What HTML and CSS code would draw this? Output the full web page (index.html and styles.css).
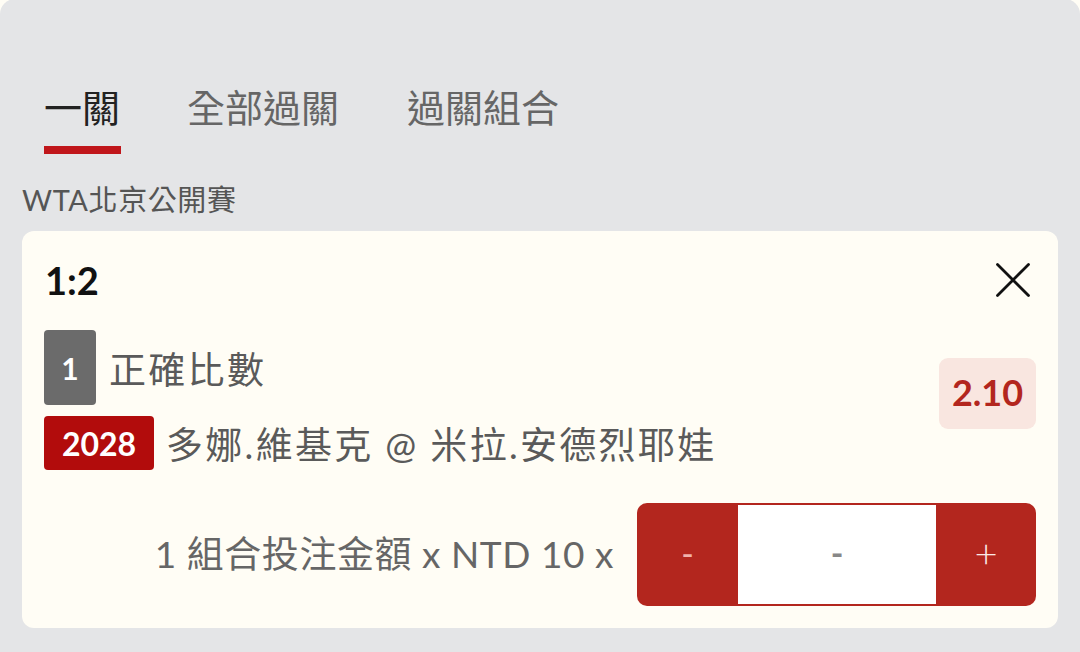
FILE: index.html
```html
<!DOCTYPE html>
<html lang="zh-Hant">
<head>
<meta charset="utf-8">
<title>Bet slip</title>
<link rel="stylesheet" href="styles.css">
</head>
<body>
<div class="panel">
  <nav class="tabs">
    <div class="tab active">一關</div>
    <div class="tab">全部過關</div>
    <div class="tab">過關組合</div>
  </nav>
  <div class="league">WTA北京公開賽</div>
  <section class="card">
    <div class="card-head">
      <div class="score">1:2</div>
      <svg class="close" width="34" height="34" viewBox="0 0 34 34" aria-hidden="true">
        <path d="M1.5 1.5 L32.5 32.5 M32.5 1.5 L1.5 32.5" stroke="#111" stroke-width="2.8" stroke-linecap="round" fill="none"/>
      </svg>
    </div>
    <div class="selection">
      <div class="sel-info">
        <div class="sel-row market">
          <span class="badge grey">1</span>
          <span class="sel-text">正確比數</span>
        </div>
        <div class="sel-row match">
          <span class="badge red">2028</span>
          <span class="sel-text">多娜.維基克 @ 米拉.安德烈耶娃</span>
        </div>
      </div>
      <div class="odds">2.10</div>
    </div>
    <div class="stake-row">
      <span class="stake-text">1 組合投注金額 x NTD 10 x</span>
      <div class="stepper">
        <button class="step minus">-</button>
        <div class="step-value">-</div>
        <button class="step plus">+</button>
      </div>
    </div>
  </section>
</div>
</body>
</html>
```
FILE: styles.css
```css
html, body {
  margin: 0;
  padding: 0;
}
body {
  background: #fffdf5;
  font-family: "Lato", "Noto Sans CJK TC", sans-serif;
  width: 1080px;
  height: 652px;
  overflow: hidden;
}
.panel {
  background: #e4e5e7;
  border-radius: 15px 15px 0 0;
  margin-top: -1px;
  padding: 84px 22px 0;
  height: 653px;
  box-sizing: border-box;
}
.tabs {
  display: flex;
  gap: 66px;
  margin-left: 22px;
}
.tab {
  font-family: "Noto Sans CJK TC", sans-serif;
  font-size: 38px;
  line-height: 46px;
  color: #666;
  display: flex;
  flex-direction: column;
}
.tab:last-child {
  margin-left: 2px;
}
.tab.active {
  color: #222;
}
.tab.active::after {
  content: "";
  display: block;
  height: 8px;
  width: 77px;
  margin-top: 17px;
  background: #c0161b;
}
.league {
  margin-top: 29px;
  font-size: 29px;
  line-height: 34px;
  letter-spacing: 0.6px;
  color: #555;
}
.card {
  margin-top: 14px;
  background: #fffdf5;
  border-radius: 12px;
  padding: 22px 22px 22px 22px;
}
.card-head {
  display: flex;
  align-items: center;
  justify-content: space-between;
  height: 54px;
  padding-right: 6px;
}
.score {
  font-size: 38px;
  font-weight: 700;
  color: #111;
  margin-left: 1px;
}
.close {
  display: block;
}
.selection {
  display: flex;
  align-items: center;
  justify-content: space-between;
  margin-top: 23px;
}
.sel-info {
  display: flex;
  flex-direction: column;
  gap: 11px;
}
.sel-row {
  display: flex;
  align-items: center;
  gap: 13px;
}
.badge {
  display: flex;
  align-items: center;
  justify-content: center;
  color: #fff;
  font-weight: 700;
  border-radius: 4px;
  box-sizing: border-box;
}
.badge.grey {
  background: #6b6b6b;
  width: 52px;
  height: 75px;
  font-size: 30px;
}
.badge.red {
  background: #b20c0c;
  width: 110px;
  height: 54px;
  font-size: 32px;
}
.sel-text {
  font-size: 37px;
  letter-spacing: 2.3px;
  color: #5a5a5a;
}
.match .sel-text {
  margin-left: -1px;
}
.odds {
  width: 97px;
  height: 71px;
  margin-bottom: 13px;
  padding-bottom: 4px;
  box-sizing: border-box;
  display: flex;
  align-items: center;
  justify-content: center;
  background: #f9e6e0;
  color: #b3261e;
  border-radius: 9px;
  font-size: 36px;
  font-weight: 700;
}
.stake-row {
  display: flex;
  justify-content: flex-end;
  align-items: center;
  gap: 23px;
  margin-top: 33px;
}
.stake-text {
  font-size: 37px;
  letter-spacing: 0.55px;
  color: #666;
  padding-bottom: 6px;
}
.stepper {
  display: flex;
  width: 399px;
  height: 103px;
  background: #b3261e;
  border-radius: 10px;
  padding: 2px 0;
  box-sizing: border-box;
}
.step {
  width: 101px;
  border: none;
  background: transparent;
  font-family: "Lato", sans-serif;
  font-size: 34px;
  padding: 0 0 4px;
}
.step.minus {
  color: #f1b1ab;
}
.step.plus {
  color: #fbe9e6;
  width: 100px;
  font-size: 40px;
  font-weight: 300;
}
.step-value {
  flex: 1;
  background: #fff;
  display: flex;
  align-items: center;
  justify-content: center;
  padding-bottom: 4px;
  color: #888;
  font-size: 34px;
  font-weight: 700;
}
```
